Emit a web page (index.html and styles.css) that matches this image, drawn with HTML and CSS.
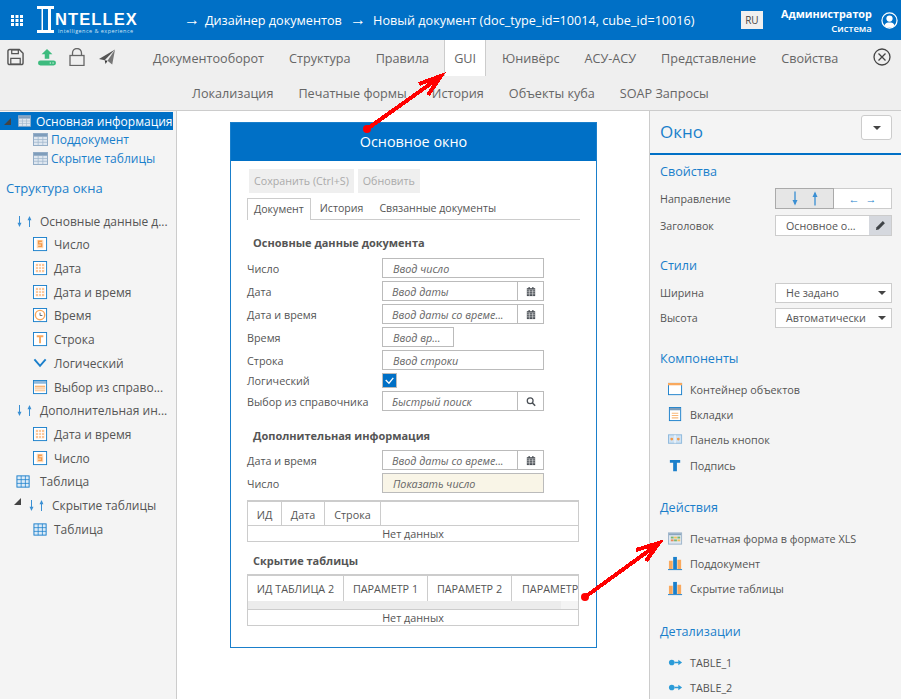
FILE: index.html
```html
<!DOCTYPE html>
<html lang="ru">
<head>
    <meta charset="UTF-8">
    <title>Дизайнер документов</title>
    <link rel="stylesheet" href="styles.css">
</head>
<body>

<svg class="icon-defs" width="0" height="0">
    <symbol id="i-num" viewBox="0 0 16 16"><rect x=".5" y=".5" width="14" height="14" fill="#fff" stroke="#1a7fcb"/><rect x="4" y="3" width="7" height="9" fill="#fdd9b5"/><path d="M9.500 4.500H6v2.800h3.200v2.700H5.500" fill="none" stroke="#f39a4a" stroke-width="1.400"/></symbol>
    <symbol id="i-str" viewBox="0 0 16 16"><rect x=".5" y=".5" width="14" height="14" fill="#fff" stroke="#1a7fcb"/><path d="M4 3.500h7v2H8.500v6.500h-2V5.500H4z" fill="#f7a75c"/></symbol>
    <symbol id="i-date" viewBox="0 0 16 16"><rect x=".5" y=".5" width="14" height="14" fill="#fff" stroke="#1a7fcb"/><path d="M3 3h9v9H3z" fill="#fbc596"/><path d="M6 3v9M9 3v9M3 6h9M3 9h9" stroke="#fff"/></symbol>
    <symbol id="i-time" viewBox="0 0 16 16"><rect x=".5" y=".5" width="14" height="14" fill="#fff" stroke="#1a7fcb"/><circle cx="7.500" cy="7.500" r="5" fill="#fff" stroke="#f7a75c" stroke-width="1.500"/><path d="M7.500 5v3h2.500" fill="none" stroke="#666"/></symbol>
    <symbol id="i-check" viewBox="0 0 16 16"><path d="M1.500 3.500l6 7 6-7" fill="none" stroke="#1a7fcb" stroke-width="2"/></symbol>
    <symbol id="i-ref" viewBox="0 0 16 16"><rect x=".5" y=".5" width="14" height="14" fill="#fff" stroke="#1a7fcb"/><path d="M1 1h13v3H1z" fill="#8fb9dc"/><path d="M2 6h11v6H2z" fill="#f9b777"/><path d="M2 8.500h11M2 10.500h11" stroke="#fff"/></symbol>
    <symbol id="i-grid" viewBox="0 0 16 16"><rect x="1" y="2" width="13" height="12" fill="#dcebf7" stroke="#1a7fcb"/><path d="M5.500 2v12M10 2v12M1 6h13M1 10h13" stroke="#1a7fcb" stroke-width=".8"/></symbol>
    <symbol id="i-sub" viewBox="0 0 16 14"><rect x=".5" y=".5" width="15" height="13" fill="#dfe7f0" stroke="#8ea9c4"/><path d="M1 1h14v3H1z" fill="#7f9dbb"/><path d="M5.500 4v9M10.500 4v9M1 7h14M1 10h14" stroke="#9fb6cc" stroke-width=".8"/></symbol>
    <symbol id="i-cont" viewBox="0 0 16 16"><rect x=".5" y="1.500" width="14" height="12" fill="#fff" stroke="#1a7fcb"/><path d="M0 1h15v2.500H0z" fill="#f9a95e"/></symbol>
    <symbol id="i-tabs" viewBox="0 0 16 16"><rect x="1.500" y=".5" width="12" height="14" fill="#fff" stroke="#1a7fcb"/><path d="M2 1h11v2.500H2z" fill="#7d9dba"/><path d="M4 6h7v1.200H4zM4 8.500h7v1.200H4zM4 11h7v1.200H4z" fill="#f9b777"/></symbol>
    <symbol id="i-panel" viewBox="0 0 16 16"><rect x=".5" y="3" width="14" height="9" fill="#cfe2f3" stroke="#8db8dc"/><path d="M7.500 3v9" stroke="#fff"/><circle cx="4" cy="7.500" r="1.500" fill="#f39a4a"/><circle cx="11" cy="7.500" r="1.500" fill="#f39a4a"/></symbol>
    <symbol id="i-text" viewBox="0 0 16 16"><path d="M2 2h11v3H9.500v9h-4V5H2z" fill="#1a7fcb"/></symbol>
    <symbol id="i-xls" viewBox="0 0 16 16"><rect x=".5" y="2" width="14" height="12" fill="#dfe7f0" stroke="#9db4ca"/><path d="M1 2.500h13v2H1z" fill="#8aa5be"/><path d="M3 6h3v2H3z" fill="#79b66e"/><path d="M6.500 6h3v2h-3z" fill="#f5c25c"/><path d="M10 6h3v2h-3z" fill="#79b66e"/><path d="M3 9h3v2H3z" fill="#e98a5a"/><path d="M6.500 9h3v2h-3z" fill="#79b66e"/><path d="M10 9h3v2h-3z" fill="#f5c25c"/></symbol>
    <symbol id="i-bars" viewBox="0 0 16 16"><path d="M1 5h4v9H1zM10 4h4v10h-4z" fill="#f9a95e"/><path d="M5.500 1h4v13h-4z" fill="#1a7fcb"/><path d="M0 14.500h15" stroke="#1a7fcb"/></symbol>
    <symbol id="i-link" viewBox="0 0 16 12"><circle cx="4" cy="6" r="3" fill="#2b9bd8"/><path d="M7 5.300h4V3l4 3-4 3V6.700H7z" fill="#2b9bd8"/></symbol>
    <symbol id="i-cal" viewBox="0 0 12 12"><path d="M1 2h10v9.500H1z" fill="#4a4f55"/><path d="M3 .5h1.500V3H3zM7.500 .5H9V3H7.500z" fill="#4a4f55"/><path d="M1 4h10M1 6.300h10M1 8.800h10M4 4v7.500M8 4v7.500" stroke="#fff" stroke-width=".6"/></symbol>
    <symbol id="i-dn" viewBox="0 0 6 14"><path d="M3 0v12" stroke="#3a8fd3" stroke-width="1.300"/><path d="M.5 8.500L3 14l2.500-5.500z" fill="#3a8fd3"/></symbol>
    <symbol id="i-up" viewBox="0 0 6 14"><path d="M3 14V2" stroke="#3a8fd3" stroke-width="1.300"/><path d="M.5 5.500L3 0l2.500 5.500z" fill="#3a8fd3"/></symbol>
</svg>

<header class="topbar">
    <svg class="apps" viewBox="0 0 12 11"><path d="M0 0h3v3H0zM4.500 0h3v3h-3zM9 0h3v3H9zM0 4h3v3H0zM4.500 4h3v3h-3zM9 4h3v3H9zM0 8h3v3H0zM4.500 8h3v3h-3zM9 8h3v3H9z" fill="#fff"/></svg>
    <div class="logo">
        <svg class="logo-i" viewBox="0 0 17 27"><path d="M0 0h17v3h-3v21h3v3H0v-3h3V3H0z" fill="#fff"/><path d="M6 3h5v21H6z" fill="#0070c6"/><path d="M3 3h1.500v21H3z" fill="#0070c6"/></svg>
        <div class="logo-text">
            <div class="logo-name">NTELLEX</div>
            <div class="logo-sub">intelligence &amp; experience</div>
        </div>
    </div>
    <div class="crumbs">
        <span class="crumb-arrow">→</span><span>Дизайнер документов</span>
        <span class="crumb-arrow crumb-next">→</span><span>Новый документ (doc_type_id=10014, cube_id=10016)</span>
    </div>
    <div class="lang">RU</div>
    <div class="user">
        <div class="user-name">Администратор</div>
        <div class="user-org">Система</div>
    </div>
    <svg class="avatar" viewBox="0 0 18 18"><circle cx="9" cy="9" r="8" fill="#0070c6" stroke="#fff" stroke-width="1.300"/><circle cx="9" cy="7" r="3.300" fill="#fff"/><path d="M3.500 14.500c1-3 3-3.500 5.500-3.500s4.500 .5 5.500 3.500c-1.500 1.300-3.500 2-5.500 2s-4-.7-5.500-2z" fill="#fff"/></svg>
</header>

<div class="toolbar">
    <div class="tool-icons">
        <svg class="tool" viewBox="0 0 18 18"><path d="M1 3a2 2 0 0 1 2-2h10l4 4v10a2 2 0 0 1-2 2H3a2 2 0 0 1-2-2z" fill="none" stroke="#555" stroke-width="1.500"/><path d="M5 1.500h7v4H5zM4 10.500h10v6H4z" fill="none" stroke="#555" stroke-width="1.300"/></svg>
        <svg class="tool tool-up" viewBox="0 0 20 20"><path d="M10 1l6 6h-3.500v5h-5V7H4z" fill="#3dbb7e"/><rect x="0" y="14" width="20" height="5.500" rx="2.700" fill="#3dbb7e"/><path d="M13 16.700h1.500M16 16.700h1.500" stroke="#fff"/></svg>
        <svg class="tool tool-lock" viewBox="0 0 16 18"><rect x="1" y="7.500" width="14" height="10" fill="none" stroke="#666" stroke-width="1.300"/><path d="M3.500 7.500V5a4.500 4.500 0 0 1 9 0v2.500" fill="none" stroke="#666" stroke-width="1.300"/></svg>
        <svg class="tool tool-send" viewBox="0 0 18 18"><path d="M17 1L0 11l6 1.500z" fill="#555"/><path d="M17 1l-3 16-5-4z" fill="#777"/><path d="M6 12.500l1 4 2-3.500z" fill="#333"/></svg>
    </div>
    <nav class="nav-row nav-first">
        <a>Документооборот</a><a>Структура</a><a>Правила</a><a class="active">GUI</a><a>Юнивёрс</a><a>АСУ-АСУ</a><a>Представление</a><a>Свойства</a>
    </nav>
    <nav class="nav-row nav-second">
        <a>Локализация</a><a>Печатные формы</a><a>История</a><a>Объекты куба</a><a>SOAP Запросы</a>
    </nav>
    <svg class="close" viewBox="0 0 18 18"><circle cx="9" cy="9" r="8" fill="none" stroke="#444" stroke-width="1.300"/><path d="M5.500 5.500l7 7M12.500 5.500l-7 7" stroke="#444" stroke-width="1.300"/></svg>
</div>

<div class="workspace">
    <aside class="left-panel">
        <div class="tree-selected"><span class="caret"></span><svg class="ico-sub ico-selected"><use href="#i-sub"/></svg>Основная информация</div>
        <div class="tree-doc"><svg class="ico-sub"><use href="#i-sub"/></svg>Поддокумент</div>
        <div class="tree-doc"><svg class="ico-sub"><use href="#i-sub"/></svg>Скрытие таблицы</div>
        <div class="left-title">Структура окна</div>
        <div class="tree">
            <div class="node lvl1"><span class="updown"><svg><use href="#i-dn"/></svg><svg><use href="#i-up"/></svg></span>Основные данные д...</div>
            <div class="node lvl2"><svg class="ico"><use href="#i-num"/></svg>Число</div>
            <div class="node lvl2"><svg class="ico"><use href="#i-date"/></svg>Дата</div>
            <div class="node lvl2"><svg class="ico"><use href="#i-date"/></svg>Дата и время</div>
            <div class="node lvl2"><svg class="ico"><use href="#i-time"/></svg>Время</div>
            <div class="node lvl2"><svg class="ico"><use href="#i-str"/></svg>Строка</div>
            <div class="node lvl2"><svg class="ico"><use href="#i-check"/></svg>Логический</div>
            <div class="node lvl2"><svg class="ico"><use href="#i-ref"/></svg>Выбор из справо...</div>
            <div class="node lvl1"><span class="updown"><svg><use href="#i-dn"/></svg><svg><use href="#i-up"/></svg></span>Дополнительная ин...</div>
            <div class="node lvl2"><svg class="ico"><use href="#i-date"/></svg>Дата и время</div>
            <div class="node lvl2"><svg class="ico"><use href="#i-num"/></svg>Число</div>
            <div class="node lvl1"><svg class="ico ico-table"><use href="#i-grid"/></svg>Таблица</div>
            <div class="node lvl1 node-open"><span class="caret caret-tree"></span><span class="updown"><svg><use href="#i-dn"/></svg><svg><use href="#i-up"/></svg></span>Скрытие таблицы</div>
            <div class="node lvl2"><svg class="ico"><use href="#i-grid"/></svg>Таблица</div>
        </div>
    </aside>

    <main class="canvas">
        <section class="window">
            <div class="window-head">Основное окно</div>
            <div class="window-body">
                <div class="actions"><button>Сохранить (Ctrl+S)</button><button>Обновить</button></div>
                <div class="tabs"><span class="tab tab-on">Документ</span><span class="tab">История</span><span class="tab">Связанные документы</span></div>

                <h3 class="group">Основные данные документа</h3>
                <div class="row row-a"><label>Число</label><div class="field">Ввод число</div></div>
                <div class="row"><label>Дата</label><div class="field field-add"><span>Ввод даты</span><b><svg class="cal"><use href="#i-cal"/></svg></b></div></div>
                <div class="row"><label>Дата и время</label><div class="field field-add"><span>Ввод даты со време...</span><b><svg class="cal"><use href="#i-cal"/></svg></b></div></div>
                <div class="row"><label>Время</label><div class="field field-short">Ввод вр...</div></div>
                <div class="row"><label>Строка</label><div class="field">Ввод строки</div></div>
                <div class="row row-check"><label>Логический</label><div class="checkbox"><svg viewBox="0 0 12 12"><path d="M2.500 5.500l3 3 4-5" fill="none" stroke="#fff" stroke-width="1.200"/></svg></div></div>
                <div class="row row-last"><label>Выбор из справочника</label><div class="field field-add"><span>Быстрый поиск</span><b><svg class="cal" viewBox="0 0 12 12"><circle cx="5" cy="5" r="3.500" fill="none" stroke="#4a4f55" stroke-width="1.500"/><path d="M7.500 7.500l3.500 3.500" stroke="#4a4f55" stroke-width="1.800"/></svg></b></div></div>

                <h3 class="group group-two">Дополнительная информация</h3>
                <div class="row row-a"><label>Дата и время</label><div class="field field-add"><span>Ввод даты со време...</span><b><svg class="cal"><use href="#i-cal"/></svg></b></div></div>
                <div class="row"><label>Число</label><div class="field field-show">Показать число</div></div>

                <div class="grid grid-one">
                    <div class="grid-head"><span class="col-id">ИД</span><span class="col-date">Дата</span><span class="col-str">Строка</span></div>
                    <div class="grid-empty">Нет данных</div>
                </div>

                <h3 class="group group-three">Скрытие таблицы</h3>
                <div class="grid">
                    <div class="grid-head grid-head-wide"><span class="col-id2">ИД ТАБЛИЦА 2</span><span class="col-par">ПАРАМЕТР 1</span><span class="col-par">ПАРАМЕТР 2</span><span class="col-par col-cut">ПАРАМЕТР</span></div>
                    <div class="grid-scroll"><div class="grid-thumb"></div></div>
                    <div class="grid-empty">Нет данных</div>
                </div>
            </div>
        </section>
    </main>

    <aside class="right-panel">
        <div class="right-head"><span>Окно</span><button class="drop-btn"><em class="down"></em></button></div>

        <h4 class="right-title right-title-first">Свойства</h4>
        <div class="prop prop-first"><label>Направление</label><div class="toggle"><span class="toggle-on"><svg><use href="#i-dn"/></svg><svg><use href="#i-up"/></svg></span><span class="toggle-off"><i>←</i><i>→</i></span></div></div>
        <div class="prop prop-gap"><label>Заголовок</label><div class="text-edit"><span>Основное о...</span><b><svg viewBox="0 0 12 12"><path d="M1 11l.7-3L8.500 1.200l2.300 2.300L4 10.300z" fill="#3f4347"/></svg></b></div></div>

        <h4 class="right-title">Стили</h4>
        <div class="prop prop-select prop-select-first"><label>Ширина</label><div class="select">Не задано<em class="down"></em></div></div>
        <div class="prop prop-select"><label>Высота</label><div class="select">Автоматически<em class="down"></em></div></div>

        <h4 class="right-title right-title-comp">Компоненты</h4>
        <ul class="items">
            <li><svg class="ico"><use href="#i-cont"/></svg>Контейнер объектов</li>
            <li><svg class="ico"><use href="#i-tabs"/></svg>Вкладки</li>
            <li><svg class="ico"><use href="#i-panel"/></svg>Панель кнопок</li>
            <li><svg class="ico"><use href="#i-text"/></svg>Подпись</li>
        </ul>

        <h4 class="right-title">Действия</h4>
        <ul class="items">
            <li><svg class="ico"><use href="#i-xls"/></svg>Печатная форма в формате XLS</li>
            <li><svg class="ico"><use href="#i-bars"/></svg>Поддокумент</li>
            <li><svg class="ico"><use href="#i-bars"/></svg>Скрытие таблицы</li>
        </ul>

        <h4 class="right-title">Детализации</h4>
        <ul class="items">
            <li><svg class="ico"><use href="#i-link"/></svg>TABLE_1</li>
            <li><svg class="ico"><use href="#i-link"/></svg>TABLE_2</li>
        </ul>
    </aside>
</div>

<!-- красные стрелки поверх скриншота -->
<svg class="marks" viewBox="0 0 901 699">
    <g fill="none" stroke="#f00" stroke-width="4" shape-rendering="crispEdges">
        <path d="M367 129L440 77M419 84L441 76L428 95"/>
        <path d="M585 597L658 544M636 550L659 543L646 561"/>
    </g>
    <circle cx="367" cy="129" r="4" fill="#f00"/>
    <circle cx="585" cy="597" r="4" fill="#f00"/>
</svg>

</body>
</html>
```

FILE: styles.css
```css
* {
    box-sizing: border-box;
}
html, body {
    height: 100%;
}
body {
    margin: 0;
    overflow: hidden;
    position: relative;
    display: flex;
    flex-direction: column;
    font-family: "Open Sans", sans-serif;
    font-size: 12px;
    color: #555;
    background-color: #fff;
}
.icon-defs {
    position: absolute;
}
.topbar {
    height: 40px;
    flex: none;
    display: flex;
    align-items: center;
    background-color: #0070c6;
    color: #fff;
}
.apps {
    width: 12px;
    height: 11px;
    margin-left: 11px;
}
.logo {
    display: flex;
    margin-left: 14px;
}
.logo-i {
    width: 17px;
    height: 27px;
}
.logo-text {
    margin-left: 1px;
}
.logo-name {
    font-family: "Liberation Sans", sans-serif;
    font-size: 16.500px;
    font-weight: 700;
    letter-spacing: 1.100px;
    line-height: 18px;
    margin-top: 4px;
}
.logo-sub {
    font-size: 5.500px;
    line-height: 6px;
    letter-spacing: .45px;
    margin-left: 3px;
    color: #cfe4f5;
}
.crumbs {
    margin-left: 46px;
    font-size: 12.650px;
    white-space: nowrap;
    width: 556px;
    flex: none;
}
.crumb-arrow {
    display: inline-block;
    width: 21px;
    font-size: 16px;
    line-height: 1;
}
.crumb-next {
    width: 23px;
    margin-left: 5px;
}
.lang {
    width: 22px;
    height: 18px;
    margin-left: 1px;
    background-color: #f0f0f0;
    color: #444;
    font-size: 10px;
    line-height: 18px;
    text-align: center;
}
.user {
    width: 109px;
    text-align: right;
    line-height: 14px;
    margin-top: 2px;
}
.user-name {
    font-weight: 700;
    font-size: 10.800px;
}
.user-org {
    font-size: 9.500px;
    font-weight: 600;
    margin-top: 1px;
}
.avatar {
    width: 17px;
    height: 17px;
    margin-left: 9px;
}

.toolbar {
    height: 71px;
    flex: none;
    position: relative;
    background-color: #efefef;
    border-bottom: 1px solid #ccc;
}
.tool-icons {
    position: absolute;
    left: 7px;
    top: 8px;
    display: flex;
    align-items: center;
}
.tool {
    width: 17px;
    height: 18px;
}
.tool-up {
    width: 20px;
    margin-left: 13px;
}
.tool-lock {
    width: 16px;
    margin-left: 12px;
}
.tool-send {
    margin-left: 14px;
}
.nav-row {
    display: flex;
    height: 36px;
    font-size: 12.650px;
    line-height: 36px;
    color: #666;
}
.nav-row a {
    padding: 0 12.500px;
    white-space: nowrap;
}
.nav-first {
    padding-left: 140.500px;
}
.nav-second {
    padding-left: 179.500px;
    height: 34px;
    line-height: 34px;
}
.nav-row a.active {
    background-color: #fff;
    border: 1px solid #ccc;
    border-width: 0 1px;
    padding: 0 9px;
    margin-left: 2.500px;
    margin-right: 3.500px;
}
.close {
    position: absolute;
    left: 873px;
    top: 8px;
    width: 18px;
    height: 18px;
}

.workspace {
    flex: 1;
    display: flex;
    min-height: 0;
}
.left-panel {
    width: 177px;
    flex: none;
    background-color: #f4f4f4;
    border-right: 1px solid #ccc;
    padding-top: 1px;
}
.tree-selected {
    height: 18px;
    width: 173px;
    display: flex;
    align-items: center;
    background-color: #0070c6;
    color: #fff;
    font-size: 12px;
    white-space: nowrap;
}
.caret {
    width: 0;
    height: 0;
    margin-left: 4px;
    flex: none;
    border-style: solid;
    border-width: 0 0 7px 7px;
    border-color: transparent transparent #444 transparent;
}
.ico-sub {
    width: 15px;
    height: 13px;
    margin-right: 3px;
    flex: none;
}
.ico-selected {
    width: 13px;
    height: 12px;
    margin: 0 5px 0 7px;
}
.tree-doc {
    height: 19px;
    padding-left: 33px;
    display: flex;
    align-items: center;
    color: #1a7fcb;
    font-size: 12px;
}
.left-title {
    margin: 10px 0 0 6px;
    height: 20px;
    font-size: 13px;
    line-height: 20px;
    color: #1a7fcb;
}
.tree {
    margin-top: 11.400px;
}
.node {
    height: 23.700px;
    display: flex;
    align-items: center;
    font-size: 12px;
    white-space: nowrap;
}
.lvl1 {
    padding-left: 17px;
}
.lvl2 {
    padding-left: 33px;
}
.node-open {
    padding-left: 14px;
}
.caret-tree {
    margin: -8px 8px 0 0;
}
.updown {
    width: 23px;
    display: flex;
    gap: 5px;
    flex: none;
}
.updown svg {
    width: 5px;
    height: 11px;
}
.toggle i {
    font-style: normal;
}
.ico {
    width: 15px;
    height: 15px;
    margin-right: 6px;
    flex: none;
}
.ico-table {
    margin-left: -1px;
    margin-right: 9px;
}

.canvas {
    flex: 1;
    padding: 11px 0 0 53px;
    min-width: 0;
}
.window {
    width: 367px;
    height: 526px;
    border: 1px solid #1a7fcb;
}
.window-head {
    height: 38px;
    background-color: #0070c6;
    color: #fff;
    font-size: 14.400px;
    line-height: 38px;
    text-align: center;
}
.window-body {
    padding: 8px 16px 0;
}
.actions {
    display: flex;
    gap: 4px;
    padding-left: 2px;
}
.actions button {
    height: 24px;
    padding: 0 5px;
    border: none;
    background-color: #efefef;
    color: #aaa;
    font-family: inherit;
    font-size: 10.700px;
}
.tabs {
    display: flex;
    height: 22px;
    margin-top: 5px;
    border-bottom: 1px solid #ccc;
    font-size: 10.600px;
    line-height: 21px;
}
.tab {
    padding: 0 8px;
}
.tab-on {
    padding: 0 6px;
    height: 22px;
    margin-right: 1px;
    background-color: #fff;
    border: 1px solid #ccc;
    border-bottom: none;
}
.group {
    margin: 15px 0 8px 6px;
    font-size: 11px;
    font-weight: 700;
    line-height: 15px;
}
.group-two {
    margin-top: 17px;
    margin-bottom: 7px;
}
.group-three {
    margin: 11px 0 6px 6px;
}
.row {
    display: flex;
    align-items: center;
    height: 20px;
    margin-bottom: 3px;
    font-size: 10.800px;
}
.row label {
    width: 135px;
    flex: none;
}
.row-check {
    height: 15px;
    margin-bottom: 3px;
}
.row-last {
    margin-bottom: 0;
}
.field {
    width: 162px;
    height: 100%;
    display: flex;
    align-items: center;
    padding-left: 10px;
    border: 1px solid #bbb;
    font-style: italic;
    color: #666;
    font-size: 10.800px;
    white-space: nowrap;
}
.field-add {
    padding-left: 9px;
    justify-content: space-between;
}
.field-add b {
    width: 26px;
    height: 100%;
    flex: none;
    display: flex;
    align-items: center;
    justify-content: center;
    border-left: 1px solid #bbb;
}
.field-short {
    width: 72px;
}
.field-show {
    background-color: #f9f5e7;
}
.cal {
    width: 10px;
    height: 11px;
}
.checkbox {
    width: 15px;
    height: 15px;
    background-color: #0070c6;
    border: 1px solid #bbb;
}
.checkbox svg {
    display: block;
}
.grid {
    width: 332px;
    border: 1px solid #ccc;
    border-top-width: 2px;
    font-size: 10.800px;
}
.grid-one {
    margin-top: 7px;
}
.grid-head {
    height: 24px;
    display: flex;
    line-height: 25px;
    white-space: nowrap;
    overflow: hidden;
    border-bottom: 1px solid #ccc;
}
.grid-head span {
    text-align: center;
    border-right: 1px solid #ccc;
    flex: none;
}
.col-id {
    width: 34px;
}
.col-date {
    width: 43px;
}
.col-str {
    width: 56px;
}
.grid-head-wide {
    height: 25px;
    line-height: 25px;
    border-bottom: none;
}
.col-id2 {
    width: 96px;
}
.col-par {
    width: 84px;
}
.grid-head .col-cut {
    border-right: none;
    text-align: left;
    padding-left: 10px;
    width: 70px;
}
.grid-scroll {
    height: 9px;
    background-color: #f4f4f4;
    border-bottom: 1px solid #ccc;
}
.grid-thumb {
    width: 313px;
    height: 8px;
    background-color: #ececec;
}
.grid-empty {
    height: 15px;
    line-height: 16px;
    text-align: center;
}

.right-panel {
    margin-left: auto;
    width: 252px;
    flex: none;
    background-color: #f4f4f4;
    border-left: 1px solid #ccc;
    overflow: hidden;
}
.right-head {
    height: 44px;
    display: flex;
    align-items: center;
    justify-content: space-between;
    padding: 0 9px 2px 10px;
    border-bottom: 2px solid #0070c6;
    color: #1a7fcb;
    font-size: 17px;
}
.drop-btn {
    width: 31px;
    height: 25px;
    margin-top: -7px;
    background-color: #fff;
    border: 1px solid #ccc;
    border-radius: 3px;
    padding: 0;
}
.down {
    display: inline-block;
    width: 0;
    height: 0;
    border-style: solid;
    border-width: 4px 4px 0 4px;
    border-color: #444 transparent transparent transparent;
    vertical-align: middle;
}
.right-title {
    margin: 0;
    height: 20px;
    padding-left: 10px;
    font-size: 12.600px;
    font-weight: 400;
    line-height: 20px;
    color: #1a7fcb;
}
.right-title-first {
    margin-top: 7px;
}
.right-title-comp {
    margin-top: 21px;
}
.prop {
    display: flex;
    align-items: center;
    height: 21px;
    margin-top: 6px;
    padding-left: 10px;
    font-size: 10.700px;
}
.prop-first {
    margin-top: 6px;
}
.prop label {
    width: 115px;
    flex: none;
}
.prop-gap {
    margin-bottom: 20px;
}
.prop-select {
    height: 20px;
    margin-top: 5px;
}
.prop-select-first {
    margin-top: 7px;
}
.toggle {
    display: flex;
    width: 117px;
    height: 100%;
}
.toggle span {
    display: flex;
    align-items: center;
    justify-content: center;
    color: #1a7fcb;
}
.toggle-on {
    width: 59px;
    gap: 14px;
    background-color: #e6e6e6;
    border: 1px solid #aaa;
}
.toggle-on svg {
    width: 6px;
    height: 15px;
}
.toggle-off {
    width: 58px;
    gap: 6px;
    background-color: #fff;
    border: 1px solid #ccc;
    border-left: none;
    font-size: 11px;
}
.text-edit {
    display: flex;
    width: 117px;
    height: 100%;
    background-color: #fff;
    border: 1px solid #ccc;
    align-items: center;
    padding-left: 10px;
    justify-content: space-between;
    white-space: nowrap;
}
.text-edit b {
    width: 22px;
    height: 100%;
    flex: none;
    display: flex;
    align-items: center;
    justify-content: center;
    background-color: #d5d8de;
}
.text-edit svg {
    width: 11px;
    height: 11px;
}
.select {
    width: 117px;
    height: 100%;
    display: flex;
    align-items: center;
    justify-content: space-between;
    padding: 0 5px 0 10px;
    background-color: #fff;
    border: 1px solid #ccc;
    white-space: nowrap;
}
.select .down {
    margin-left: 2px;
}
.items {
    list-style: none;
    margin: 0 0 20.500px;
    padding: 7.500px 0 0 18px;
    font-size: 10.800px;
}
.items li {
    height: 25.300px;
    display: flex;
    align-items: center;
    white-space: nowrap;
}
.items .ico {
    margin-right: 7px;
}

.marks {
    position: absolute;
    left: 0;
    top: 0;
    width: 901px;
    height: 699px;
    pointer-events: none;
}
```
